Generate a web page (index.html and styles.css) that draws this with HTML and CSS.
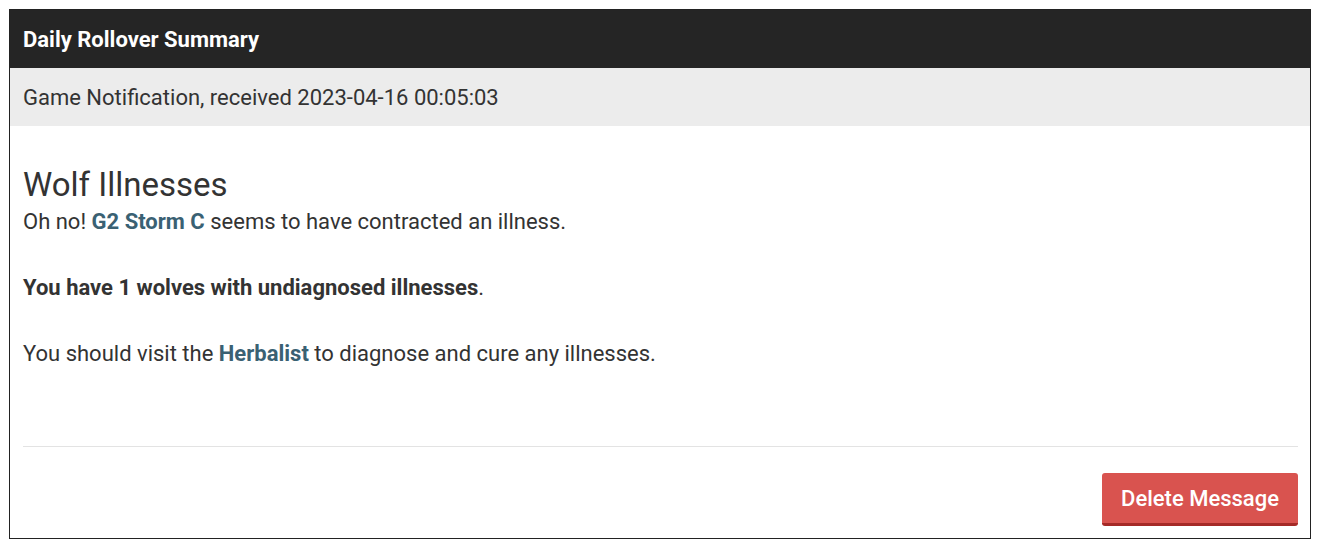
FILE: index.html
```html
<!DOCTYPE html>
<html>
<head>
<meta charset="utf-8">
<link rel="stylesheet" href="styles.css">
</head>
<body>
<div class="panel">
  <div class="panel-head">Daily Rollover Summary</div>
  <div class="panel-sub">Game Notification, received 2023-04-16 00:05:03</div>
  <div class="panel-body">
    <h2 class="title">Wolf Illnesses</h2>
    <p class="line">Oh no! <a class="link" href="#">G2 Storm C</a> seems to have contracted an illness.</p>
    <p class="line"><strong>You have 1 wolves with undiagnosed illnesses</strong>.</p>
    <p class="line">You should visit the <a class="link" href="#">Herbalist</a> to diagnose and cure any illnesses.</p>
    <div class="divider"></div>
    <div class="actions">
      <button class="btn-delete">Delete Message</button>
    </div>
  </div>
</div>
</body>
</html>
```

FILE: styles.css
```css
html, body {
  margin: 0;
  padding: 0;
  background: #fff;
}
body {
  padding: 9px 11px 9px 9px;
  font-family: Roboto, "Liberation Sans", sans-serif;
  color: #333;
}
.panel {
  border: 1px solid #222;
  height: 530px;
  box-sizing: border-box;
  display: flex;
  flex-direction: column;
}
.panel-head {
  background: #252525;
  color: #fff;
  font-weight: 700;
  font-size: 22px;
  height: 58px;
  display: flex;
  align-items: center;
  padding-left: 13px;
}
.panel-sub {
  background: #ececec;
  font-size: 22px;
  height: 58px;
  display: flex;
  align-items: center;
  padding-left: 13px;
}
.panel-body {
  flex: 1;
  padding: 38px 12px 0 13px;
  display: flex;
  flex-direction: column;
}
.title {
  margin: 0;
  font-weight: 400;
  font-size: 33px;
  line-height: 42px;
}
.line {
  margin: 0 0 35px 0;
  font-size: 22px;
  line-height: 31px;
}
.line strong {
  font-weight: 700;
}
.link {
  color: #3a6173;
  font-weight: 700;
  text-decoration: none;
}
.divider {
  margin-top: 42px;
  border-top: 1px solid #e3e3e3;
}
.actions {
  display: flex;
  justify-content: flex-end;
  padding-top: 26px;
}
.btn-delete {
  background: #d9534f;
  color: #fff;
  border: none;
  border-bottom: 3px solid #a52a27;
  border-radius: 3px;
  font-family: Roboto, "Liberation Sans", sans-serif;
  font-size: 22px;
  font-weight: 500;
  width: 196px;
  height: 53px;
  padding: 0;
}
```
